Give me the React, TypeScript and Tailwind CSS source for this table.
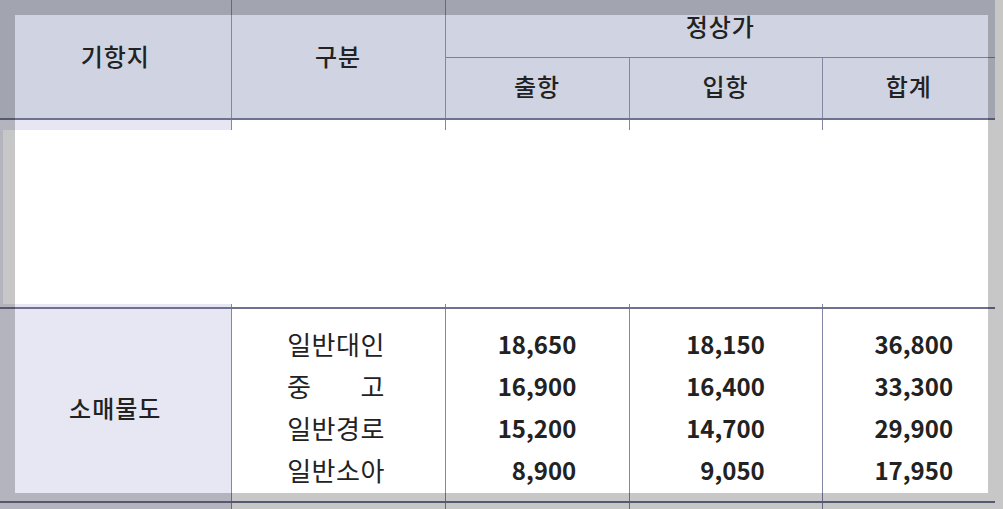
import React from "react";

const ROWS = [
  { label: "일반대인", dep: "18,650", arr: "18,150", sum: "36,800" },
  { label: "중고", dep: "16,900", arr: "16,400", sum: "33,300" },
  { label: "일반경로", dep: "15,200", arr: "14,700", sum: "29,900" },
  { label: "일반소아", dep: "8,900", arr: "9,050", sum: "17,950" },
];

function NumCell({ values, last }: { values: string[]; last?: boolean }) {
  return (
    <td
      className={
        last
          ? "border-l border-[#8486a3] text-center align-top pt-[14px] pl-[10px]"
          : "border-x border-[#8486a3] text-center align-top pt-[14px]"
      }
    >
      <div className="inline-block text-right">
        {values.map((v, i) => (
          <div key={i} className="leading-[42px] font-bold">
            {v}
          </div>
        ))}
      </div>
    </td>
  );
}

export default function App() {
  return (
    <div
      className="relative w-[1003px] h-[509px] overflow-hidden bg-white text-[#222]"
      style={{ fontFamily: '"Noto Sans CJK KR", "Noto Sans", sans-serif' }}
    >
      <table className="table-fixed border-collapse w-[995px]">
        <colgroup>
          <col className="w-[231px]" />
          <col className="w-[214px]" />
          <col className="w-[184px]" />
          <col className="w-[193px]" />
          <col className="w-[173px]" />
        </colgroup>
        <thead className="bg-[#d0d3e1] text-[24px] tracking-[1px]">
          <tr className="h-[57px]">
            <th rowSpan={2} className="border-r border-[#8486a3] border-b-2 border-b-[#6f7190] font-medium pb-[6px]">
              기항지
            </th>
            <th rowSpan={2} className="border-x border-[#8486a3] border-b-2 border-b-[#6f7190] font-medium pb-[6px]">
              구분
            </th>
            <th colSpan={3} className="border-b border-[#7c7e9c] font-medium pb-[5px]">
              정상가
            </th>
          </tr>
          <tr className="h-[62px]">
            <th className="border-x border-[#8486a3] border-b-2 border-b-[#6f7190] font-medium pb-[4px]">출항</th>
            <th className="border-x border-[#8486a3] border-b-2 border-b-[#6f7190] font-medium pb-[4px]">입항</th>
            <th className="border-l border-[#8486a3] border-b-2 border-b-[#6f7190] font-medium pb-[4px]">합계</th>
          </tr>
        </thead>
        <tbody className="text-[24px]">
          <tr className="h-[189px] border-b-2 border-[#6f7190]">
            <td className="bg-[#e6e7f2] border-r border-[#8486a3]" />
            <td className="border-x border-[#8486a3]" />
            <td className="border-x border-[#8486a3]" />
            <td className="border-x border-[#8486a3]" />
            <td className="border-l border-[#8486a3]" />
          </tr>
          <tr className="h-[194px] border-b-2 border-[#6f7190]">
            <td className="bg-[#e6e7f2] border-r border-[#8486a3] text-center text-[24px] tracking-[1px] font-medium pt-[6px]">
              소매물도
            </td>
            <td className="border-x border-[#8486a3] text-center align-top pt-[14px] pr-[4px]">
              <div className="inline-block w-[98px] text-[26px] tracking-[0.5px]">
                {ROWS.map((r) =>
                  r.label === "중고" ? (
                    <div key={r.label} className="flex justify-between leading-[42px]">
                      <span>중</span>
                      <span>고</span>
                    </div>
                  ) : (
                    <div key={r.label} className="leading-[42px] whitespace-nowrap">
                      {r.label}
                    </div>
                  )
                )}
              </div>
            </td>
            <NumCell values={ROWS.map((r) => r.dep)} />
            <NumCell values={ROWS.map((r) => r.arr)} />
            <NumCell values={ROWS.map((r) => r.sum)} last />
          </tr>
          <tr className="h-[40px]">
            <td className="bg-[#e6e7f2] border-r border-[#8486a3]" />
            <td className="border-x border-[#8486a3]" />
            <td className="border-x border-[#8486a3]" />
            <td className="border-x border-[#8486a3]" />
            <td className="border-l border-[#8486a3]" />
          </tr>
        </tbody>
      </table>

      {/* white sheet laid over the first body row */}
      <div className="absolute left-[3px] top-[130px] w-[1010px] h-[174px] bg-white" />

      {/* dimmed frame around the highlighted area */}
      <div className="absolute left-[15px] top-[15px] w-[973px] h-[478px] shadow-[0_0_0_2000px_rgba(0,0,0,0.22)]" />
    </div>
  );
}
